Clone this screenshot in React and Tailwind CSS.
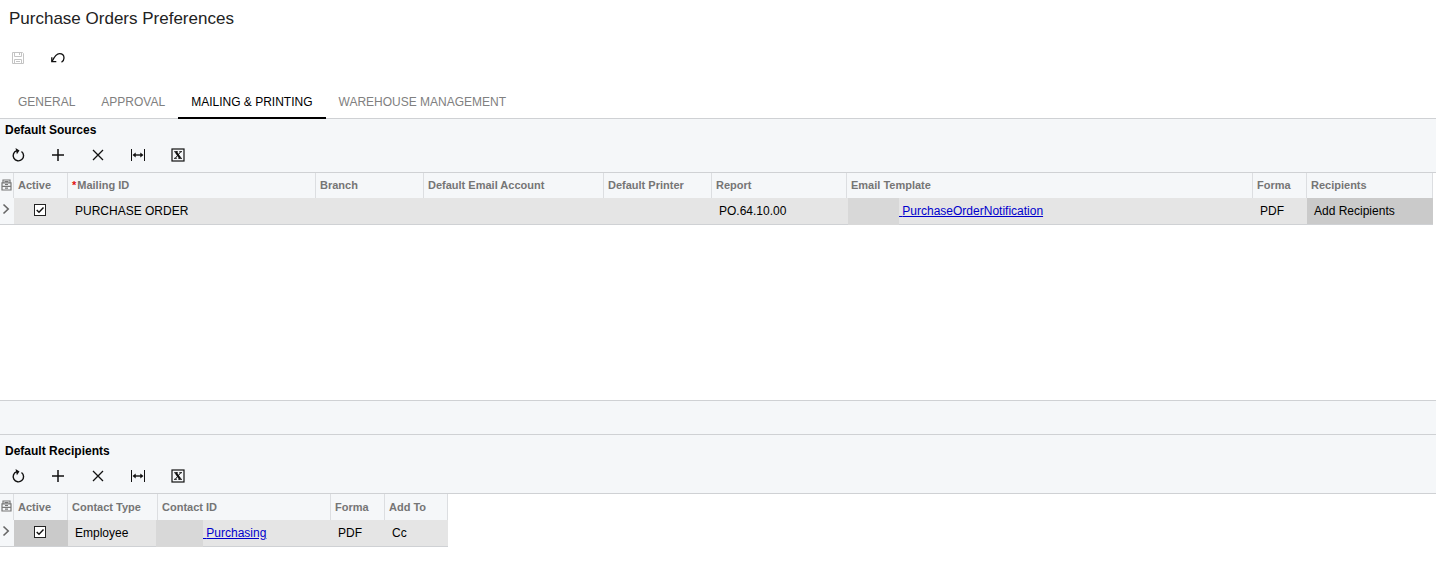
import React, { useState } from "react";

const SaveIcon = () => (
    <svg width="14" height="14" viewBox="0 0 14 14" fill="none" stroke="#c4c4c4">
        <path d="M1.5 1.5h10l1 1v10h-11z" />
        <path d="M3.5 1.5v4h7v-4M8.5 2v2M3.5 12.5v-4h7v4M5 10.500h4" />
    </svg>
);

const UndoIcon = () => (
    <svg width="16" height="14" viewBox="0 0 16 14" fill="none" stroke="#111" strokeWidth="1.300">
        <path d="M2 10.500C4.500 5.500 6.500 2.700 9.500 2.700c2.700 0 4.500 1.800 4.500 4.300 0 1.900-.9 3.300-2.500 4.300" />
        <path d="M1.800 6.200v4.500h4.500" />
    </svg>
);

const RefreshIcon = () => (
    <svg width="14" height="14" viewBox="0 0 14 14" fill="none" stroke="#111" strokeWidth="1.400">
        <path d="M10.500 3.500A5.200 5.200 0 1 1 5.800 2.700" />
        <path d="M4.500 0l4 2.600-2.600 3.600z" fill="#111" stroke="none" />
    </svg>
);

const PlusIcon = () => (
    <svg width="14" height="14" viewBox="0 0 14 14" fill="none" stroke="#111" strokeWidth="1.500">
        <path d="M7 1v12M1 7h12" />
    </svg>
);

const DeleteIcon = () => (
    <svg width="14" height="14" viewBox="0 0 14 14" fill="none" stroke="#111" strokeWidth="1.300">
        <path d="M2 2l10 10M12 2L2 12" />
    </svg>
);

const FitIcon = () => (
    <svg width="16" height="14" viewBox="0 0 16 14" fill="none" stroke="#111">
        <path d="M1.500 1v12M14.500 1v12" />
        <path d="M4 7h8" strokeWidth="1.400" />
        <path d="M2.500 7l3.200-2.500v5zM13.500 7l-3.200-2.500v5z" fill="#111" stroke="none" />
    </svg>
);

const ExcelIcon = () => (
    <svg width="14" height="14" viewBox="0 0 14 14" fill="none" stroke="#111">
        <rect x="1" y="1" width="12" height="12" strokeWidth="1.200" />
        <path d="M4.800 3.800l4.400 6.400" strokeWidth="2.200" />
        <path d="M9.700 3.800L4.300 10.200M3.200 3.700h3.600M8.300 3.700h2.700M3 10.300h2.800M7.300 10.300h3.700" />
    </svg>
);

const FilesIcon = () => (
    <svg width="11" height="12" viewBox="0 0 11 12" fill="none" stroke="#777" strokeWidth="1.200">
        <path d="M2 3.500V1h7v2.500M1 3.800h9v7.200H1zM1 7.400h9" />
        <path d="M3.500 2.500h4M4 5.500h3M4 9.200h3" />
    </svg>
);

const ChevronIcon = () => (
    <svg width="8" height="12" viewBox="0 0 8 12" fill="none" stroke="#666" strokeWidth="1.600">
        <path d="M1.500 1.500l4.700 4.500-4.700 4.500" />
    </svg>
);

const tabs = ["GENERAL", "APPROVAL", "MAILING & PRINTING", "WAREHOUSE MANAGEMENT"];

const actions = [
    { label: "Refresh", icon: <RefreshIcon /> },
    { label: "Add Row", icon: <PlusIcon /> },
    { label: "Delete Row", icon: <DeleteIcon /> },
    { label: "Fit to Screen", icon: <FitIcon /> },
    { label: "Export to Excel", icon: <ExcelIcon /> },
];

function IconButton({ label, disabled, children }) {
    return (
        <button
            type="button"
            aria-label={label}
            disabled={disabled}
            className="flex h-6 w-6 items-center justify-center"
        >
            {children}
        </button>
    );
}

function GridHeader({ title }) {
    return (
        <div className="border-b border-[#cfd1d4] bg-[#f5f7f9] px-[5px]">
            <h2 className="pt-[3px] text-[12px] leading-4 font-bold">{title}</h2>
            <div className="flex gap-4 px-px py-[5px]">
                {actions.map((a) => (
                    <IconButton key={a.label} label={a.label}>
                        {a.icon}
                    </IconButton>
                ))}
            </div>
        </div>
    );
}

function Th({ required, children }) {
    return (
        <th
            scope="col"
            className="overflow-hidden border-r border-[#dcdee1] py-0 pr-0 pl-1 text-left text-[11px] font-bold whitespace-nowrap text-[#757575]"
        >
            {required && <span className="mr-px text-[#e01010]">*</span>}
            {children}
        </th>
    );
}

function Td({ className = "pl-[7px]", children }) {
    return (
        <td className={`border-b border-[#cfd1d4] py-0 pr-0 text-[12px] whitespace-nowrap ${className}`}>
            {children}
        </td>
    );
}

function ActiveCheck({ label }) {
    const [checked, setChecked] = useState(true);
    return (
        <span className="relative mb-[3px] block h-3 w-3">
            <input
                type="checkbox"
                aria-label={label}
                checked={checked}
                onChange={(e) => setChecked(e.target.checked)}
                className="block h-3 w-3 appearance-none border border-[#222] bg-white"
            />
            {checked && (
                <svg
                    className="pointer-events-none absolute inset-0"
                    width="12"
                    height="12"
                    viewBox="0 0 12 12"
                    fill="none"
                    stroke="#111"
                    strokeWidth="1.400"
                >
                    <path d="M2.700 6l2.300 2.300L9.500 3.500" />
                </svg>
            )}
        </span>
    );
}

// link whose first part is hidden behind a grey block
function MaskedLink({ width, children }) {
    return (
        <>
            <span className={`absolute top-0 h-[27px] bg-[#d8d8d8] ${width}`} />
            <a href="#" className="text-[#0000cc] underline">
                &nbsp;{children}
            </a>
        </>
    );
}

function FilesHead() {
    return (
        <th scope="col" aria-label="Files" className="border-r border-[#dcdee1] py-0 pr-0 pb-[2px] pl-px">
            <FilesIcon />
        </th>
    );
}

function RowMark() {
    return (
        <td className="border-b border-[#cfd1d4] bg-[#f5f7f9] py-0 pr-0 pb-1 pl-[2px]">
            <ChevronIcon />
        </td>
    );
}

function SourcesTable() {
    return (
        <div className="pr-[3px]">
            <table className="w-full table-fixed border-separate border-spacing-0">
                <colgroup>
                    <col className="w-[14px]" />
                    <col className="w-[54px]" />
                    <col className="w-[248px]" />
                    <col className="w-[108px]" />
                    <col className="w-[180px]" />
                    <col className="w-[108px]" />
                    <col className="w-[135px]" />
                    <col />
                    <col className="w-[54px]" />
                    <col className="w-[126px]" />
                </colgroup>
                <thead className="bg-[#f5f7f9]">
                    <tr className="h-[25px]">
                        <FilesHead />
                        <Th>Active</Th>
                        <Th required>Mailing ID</Th>
                        <Th>Branch</Th>
                        <Th>Default Email Account</Th>
                        <Th>Default Printer</Th>
                        <Th>Report</Th>
                        <Th>Email Template</Th>
                        <Th>Forma</Th>
                        <Th>Recipients</Th>
                    </tr>
                </thead>
                <tbody>
                    <tr className="h-[27px] bg-[#e5e5e5]">
                        <RowMark />
                        <Td className="pl-5">
                            <ActiveCheck label="Purchase order active" />
                        </Td>
                        <Td>PURCHASE ORDER</Td>
                        <Td />
                        <Td />
                        <Td />
                        <Td>PO.64.10.00</Td>
                        <Td className="relative pl-[52px]">
                            <MaskedLink width="left-px w-[51px]">PurchaseOrderNotification</MaskedLink>
                        </Td>
                        <Td>PDF</Td>
                        <Td className="bg-[#cacaca] pl-[7px]">Add Recipients</Td>
                    </tr>
                </tbody>
            </table>
        </div>
    );
}

function RecipientsTable() {
    return (
        <table className="w-[448px] table-fixed border-separate border-spacing-0">
            <colgroup>
                <col className="w-[14px]" />
                <col className="w-[54px]" />
                <col className="w-[90px]" />
                <col className="w-[173px]" />
                <col className="w-[54px]" />
                <col className="w-[63px]" />
            </colgroup>
            <thead className="bg-[#f5f7f9]">
                <tr className="h-[26px]">
                    <FilesHead />
                    <Th>Active</Th>
                    <Th>Contact Type</Th>
                    <Th>Contact ID</Th>
                    <Th>Forma</Th>
                    <Th>Add To</Th>
                </tr>
            </thead>
            <tbody>
                <tr className="h-[27px] bg-[#e5e5e5]">
                    <RowMark />
                    <Td className="bg-[#cacaca] pl-5">
                        <ActiveCheck label="Employee active" />
                    </Td>
                    <Td>Employee</Td>
                    <Td className="relative pl-[45px]">
                        <MaskedLink width="-left-[2px] w-[47px]">Purchasing</MaskedLink>
                    </Td>
                    <Td>PDF</Td>
                    <Td>Cc</Td>
                </tr>
            </tbody>
        </table>
    );
}

export default function App() {
    const [active, setActive] = useState("MAILING & PRINTING");

    return (
        <main className="min-h-screen bg-white font-['Liberation_Sans',Arial,sans-serif] text-black">
            <h1 className="px-[9px] pt-[7px] text-[17px] leading-6 text-[#222]">Purchase Orders Preferences</h1>

            <div className="flex gap-4 px-[6px] pt-[15px]">
                <IconButton label="Save" disabled>
                    <SaveIcon />
                </IconButton>
                <IconButton label="Undo">
                    <UndoIcon />
                </IconButton>
            </div>

            <div role="tablist" className="mt-[17px] flex border-b border-[#cfd1d4] pl-[5px]">
                {tabs.map((tab) => (
                    <button
                        key={tab}
                        type="button"
                        role="tab"
                        aria-selected={active === tab}
                        onClick={() => setActive(tab)}
                        className={`-mb-px h-8 border-b-2 px-[13px] text-[12px] whitespace-nowrap ${
                            active === tab ? "border-black text-black" : "border-transparent text-[#808080]"
                        }`}
                    >
                        {tab}
                    </button>
                ))}
            </div>

            <section className="min-h-[281px]">
                <GridHeader title="Default Sources" />
                <SourcesTable />
            </section>

            <div className="h-[35px] border-y border-[#cfd1d4] bg-[#f5f7f9]" />

            <section>
                <div className="bg-[#f5f7f9] pt-[5px]">
                    <GridHeader title="Default Recipients" />
                </div>
                <RecipientsTable />
            </section>
        </main>
    );
}
